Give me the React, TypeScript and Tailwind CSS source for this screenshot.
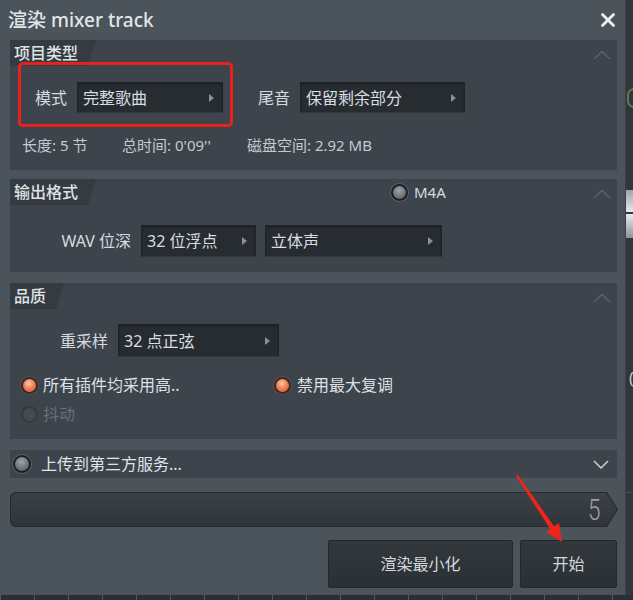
import React from "react";

const FONT = "font-['Noto_Sans','Noto_Sans_CJK_SC',sans-serif]";

function Arrow() {
  return (
    <span className="w-0 h-0 border-y-[4px] border-y-transparent border-l-[5px] border-l-[#8a9097]" />
  );
}

function Dropdown({ text, w, h = 31 }: { text: string; w: string; h?: number }) {
  return (
    <div
      className={`${w} flex items-center justify-between pl-[5px] pr-[8px] bg-[#272c31] border border-[#202428] border-b-[#33383d] shadow-[inset_0_1px_2px_rgba(0,0,0,0.35)] text-[16px] text-[#d9dde1]`}
      style={{ height: h }}
    >
      <span className="leading-none">{text}</span>
      <Arrow />
    </div>
  );
}

function OrangeRadio() {
  return (
    <span className="w-[17px] h-[17px] shrink-0 rounded-full bg-[#2a2e32] p-[2px] shadow-[0_0_0_1px_#6b4a3e]">
      <span className="block w-full h-full rounded-full bg-[radial-gradient(circle_at_45%_35%,#ffc9ad_0%,#f47f52_45%,#d24f29_100%)]" />
    </span>
  );
}

function DarkRadio({ size = "w-[17px] h-[17px]" }: { size?: string }) {
  return (
    <span className={`${size} shrink-0 rounded-full bg-[#1c1f22] p-[2px] shadow-[0_0_0_1px_#596068]`}>
      <span className="block w-full h-full rounded-full bg-[radial-gradient(circle_at_45%_35%,#9ea4aa_0%,#6b7278_60%,#50565c_100%)]" />
    </span>
  );
}

function DisabledRadio() {
  return (
    <span className="w-[17px] h-[17px] shrink-0 rounded-full bg-[#343a3f] p-[2px]">
      <span className="block w-full h-full rounded-full bg-[#434a50]" />
    </span>
  );
}

function ChevronUp() {
  return (
    <svg width="18" height="10" viewBox="0 0 18 10" className="block">
      <path d="M1 9 L9 1.5 L17 9" fill="none" stroke="#5a626a" strokeWidth="1.4" />
    </svg>
  );
}

function Tab({ text }: { text: string }) {
  return (
    <div className="h-[26px] flex items-center pl-[4px] pr-[18px] bg-[#353b41] [clip-path:polygon(0_0,100%_0,calc(100%-8px)_100%,0_100%)] text-[16px] text-[#dfe3e6] font-medium">
      {text}
    </div>
  );
}

export default function App() {
  return (
    <div className={`${FONT} w-[633px] h-[600px] bg-[#2e3338] flex flex-col relative overflow-hidden`}>
      <div className="flex h-[595px]">
        {/* Dialog */}
        <div className="w-[625px] h-[595px] bg-[#4b535b] flex flex-col">
          {/* Title */}
          <div className="h-[40px] flex items-center justify-between pl-[8px] pr-[10px]">
            <span className="text-[19px] text-[#e2e6e9] leading-none font-medium">渲染 mixer track</span>
            <svg width="14" height="14" viewBox="0 0 14 14">
              <path d="M1.5 1.5 L12.5 12.5 M12.5 1.5 L1.5 12.5" stroke="#eef0f2" strokeWidth="2.8" strokeLinecap="round" />
            </svg>
          </div>

          <div className="pl-[10px] pr-[8px] flex flex-col">
            {/* Section 1 */}
            <div className="h-[130px] bg-[#3d444b] flex flex-col">
              <div className="flex items-start justify-between">
                <Tab text="项目类型" />
                <div className="pt-[10px] pr-[6px]"><ChevronUp /></div>
              </div>
              <div className="mt-[16px] flex items-center h-[31px]">
                <span className="w-[67px] pr-[10px] text-right text-[16px] text-[#d6dbe0]">模式</span>
                <Dropdown text="完整歌曲" w="w-[146px]" />
                <span className="ml-[35px] mr-[10px] text-[16px] text-[#d6dbe0]">尾音</span>
                <Dropdown text="保留剩余部分" w="w-[165px]" />
              </div>
              <div className="mt-[22px] h-[20px] flex items-center pl-[12px] text-[15px] text-[#c4cad0]">
                <span className="w-[100px]">长度: 5 节</span>
                <span className="w-[125px]">总时间: 0'09''</span>
                <span>磁盘空间: 2.92 MB</span>
              </div>
            </div>

            {/* Section 2 */}
            <div className="mt-[9px] h-[93px] bg-[#3d444b] flex flex-col">
              <div className="flex items-start">
                <Tab text="输出格式" />
                <div className="ml-[295px] h-[26px] flex items-center gap-[6px]">
                  <DarkRadio />
                  <span className="text-[15px] text-[#d6dbe0]">M4A</span>
                </div>
                <div className="ml-auto pt-[10px] pr-[6px]"><ChevronUp /></div>
              </div>
              <div className="mt-[20px] flex items-center">
                <span className="w-[131px] pr-[10px] text-right text-[16px] text-[#d6dbe0]">WAV 位深</span>
                <Dropdown text="32 位浮点" w="w-[115px]" h={32} />
                <div className="ml-[9px]">
                  <Dropdown text="立体声" w="w-[177px]" h={32} />
                </div>
              </div>
            </div>

            {/* Section 3 */}
            <div className="mt-[11px] h-[156px] bg-[#3d444b] flex flex-col">
              <div className="flex items-start justify-between">
                <Tab text="品质" />
                <div className="pt-[10px] pr-[6px]"><ChevronUp /></div>
              </div>
              <div className="mt-[15px] flex items-center">
                <span className="w-[108px] pr-[10px] text-right text-[16px] text-[#d6dbe0]">重采样</span>
                <Dropdown text="32 点正弦" w="w-[161px]" h={33} />
              </div>
              <div className="mt-[18px] h-[20px] flex items-center pl-[11px]">
                <div className="w-[253px] flex items-center gap-[5px]">
                  <OrangeRadio />
                  <span className="text-[16px] text-[#dde1e5]">所有插件均采用高..</span>
                </div>
                <div className="flex items-center gap-[6px]">
                  <OrangeRadio />
                  <span className="text-[16px] text-[#dde1e5]">禁用最大复调</span>
                </div>
              </div>
              <div className="mt-[9px] h-[20px] flex items-center pl-[11px] gap-[5px]">
                <DisabledRadio />
                <span className="text-[16px] text-[#68707a]">抖动</span>
              </div>
            </div>

            {/* Section 4 */}
            <div className="mt-[11px] h-[28px] bg-[#3d444b] flex items-center pl-[3px] pr-[8px]">
              <DarkRadio size="w-[18px] h-[18px]" />
              <span className="ml-[10px] text-[16px] text-[#e0e4e8]">上传到第三方服务...</span>
              <svg width="16" height="9" viewBox="0 0 16 9" className="ml-auto">
                <path d="M1 1 L8 8 L15 1" fill="none" stroke="#c5cbd0" strokeWidth="1.6" />
              </svg>
            </div>

            {/* Progress */}
            <div className="mt-[14px] h-[35px] w-[608px] rounded-l-md bg-[#26292d] p-[1px] [clip-path:polygon(0_0,calc(100%-11px)_0,100%_50%,calc(100%-11px)_100%,0_100%)]">
              <div className="w-full h-full rounded-l-md bg-[linear-gradient(#3b4147,#30353a)] [clip-path:polygon(0_0,calc(100%-11px)_0,100%_50%,calc(100%-11px)_100%,0_100%)] flex items-center justify-end pr-[14px]">
                <span className="font-['Roboto',sans-serif] font-light text-[30px] leading-none text-[#9aa1a8] scale-x-75">5</span>
              </div>
            </div>

            {/* Buttons */}
            <div className="mt-[13px] flex justify-end gap-[7px]">
              <div className="w-[185px] h-[48px] flex items-center justify-center bg-[linear-gradient(#33383d,#2b3034)] border border-[#24282c] rounded-[2px] text-[16px] text-[#d4d8dc]">
                渲染最小化
              </div>
              <div className="w-[97px] h-[48px] flex items-center justify-center bg-[linear-gradient(#33383d,#2b3034)] border border-[#24282c] rounded-[2px] text-[16px] text-[#d4d8dc]">
                开始
              </div>
            </div>
          </div>
        </div>

        {/* Right background strip */}
        <div className="w-[8px] h-[595px] bg-[#30363b] relative border-l border-[#3a4046]">
          <span className="absolute left-[1px] top-[88px] w-[14px] h-[20px] rounded-full border-2 border-[#5c7a4a]" />
          <span className="absolute left-0 top-[190px] w-[8px] h-[22px] bg-[linear-gradient(#9ea3a8,#e8eaec)]" />
          <span className="absolute left-0 top-[214px] w-[8px] h-[24px] bg-[linear-gradient(#e8eaec,#8e9398)]" />
          <span className="absolute left-[3px] top-[370px] text-[16px] leading-none text-[#c8ccd0]">(</span>
          <span className="absolute left-0 top-[492px] w-[8px] h-[1px] bg-[#4a5056]" />
        </div>
      </div>
      {/* bottom ruler */}
      <div className="h-[5px] bg-[#2a2f33] bg-[repeating-linear-gradient(90deg,#4f565c_0_1px,transparent_1px_34px)]" />

      {/* Red annotation box */}
      <div className="absolute left-[18px] top-[62px] w-[215px] h-[65px] border-[3px] border-[#e8221b] rounded-[5px] pointer-events-none" />

      {/* Red arrow annotation */}
      <svg className="absolute left-0 top-0 pointer-events-none" width="633" height="600" viewBox="0 0 633 600">
        <polygon points="516,476 518,475 554.5,527 550.5,529.5" fill="#f0241c" />
        <polygon points="562,542 546,532 559,523" fill="#f0241c" />
      </svg>
    </div>
  );
}
